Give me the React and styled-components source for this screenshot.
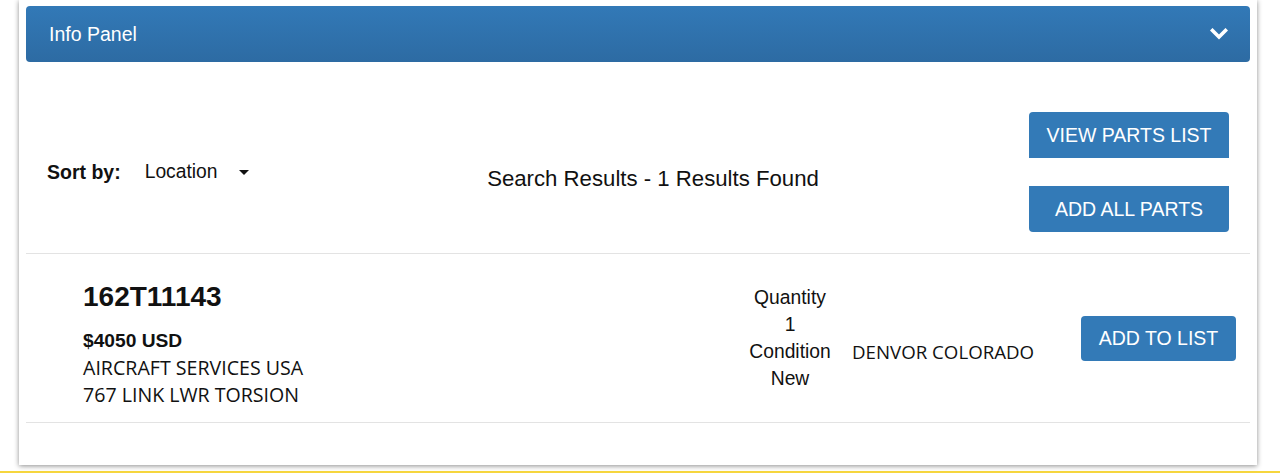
import React from "react";
import styled, { createGlobalStyle } from "styled-components";

const GlobalStyle = createGlobalStyle`
  body {
    margin: 0;
    background: #fff;
    font-family: "Liberation Sans", Arial, sans-serif;
    color: #111;
  }
`;

const Page = styled.div`
  padding-left: 19px;
  height: 471px;
  border-bottom: 2px solid #f6d63e;
  box-sizing: content-box;
`;

const Card = styled.div`
  width: 1238px;
  height: 465px;
  box-sizing: border-box;
  padding: 6px 7px 0;
  background: #fff;
  box-shadow: 0 1px 5px rgba(0, 0, 0, 0.45);
`;

const Header = styled.div`
  height: 56px;
  border-radius: 4px;
  background: linear-gradient(#3279b7, #2d6ba3);
  padding: 0 22px 0 23px;
  display: flex;
  align-items: center;
  justify-content: space-between;
  color: #fff;
  font-size: 19.5px;
`;

const Toolbar = styled.div`
  display: flex;
  align-items: center;
  padding: 50px 21px 21px;
  border-bottom: 1px solid #e3e3e3;
`;

const Sort = styled.div`
  display: flex;
  align-items: center;
  width: 220px;
`;

const SortLabel = styled.span`
  font-weight: bold;
  font-size: 19.5px;
`;

const SortValue = styled.span`
  margin-left: 24px;
  font-size: 19.3px;
`;

const Caret = styled.span`
  margin-left: 21px;
  margin-top: 1px;
  width: 0;
  height: 0;
  border-left: 5px solid transparent;
  border-right: 5px solid transparent;
  border-top: 5px solid #111;
`;

const ResultText = styled.div`
  flex: 1;
  text-align: center;
  font-size: 22.2px;
  padding-left: 10px;
  margin-top: 14px;
`;

const ButtonStack = styled.div`
  display: flex;
  flex-direction: column;
  gap: 28px;
`;

const Button = styled.button`
  width: ${(p) => p.$w || 200}px;
  height: ${(p) => p.$h || 46}px;
  border: none;
  background: #337ab7;
  color: #fff;
  font-family: "Liberation Sans", Arial, sans-serif;
  font-size: 19.5px;
  border-radius: ${(p) => p.$radius || "4px"};
  padding: 0;
`;

const ItemRow = styled.div`
  display: flex;
  align-items: center;
  height: 168px;
  padding: 0 14px 0 57px;
  border-bottom: 1px solid #e3e3e3;
`;

const Info = styled.div`
  flex: 1;
  margin-top: 14px;
`;

const PartNo = styled.div`
  font-size: 28px;
  font-weight: bold;
  line-height: 30px;
  margin-bottom: 15px;
`;

const Price = styled.div`
  font-size: 19.2px;
  font-weight: bold;
  line-height: 27px;
`;

const PlainLine = styled.div`
  font-family: "Open Sans", "DejaVu Sans", sans-serif;
  font-size: 19.6px;
  line-height: 27px;
  color: #111;
`;

const Qty = styled.div`
  width: 100px;
  text-align: center;
  font-size: 19.3px;
  line-height: 27px;
`;

const Location = styled.div`
  width: 229px;
  margin-left: 12px;
  margin-top: 27px;
  font-family: "Open Sans", "DejaVu Sans", sans-serif;
  font-size: 18.7px;
`;

function Chevron() {
  return (
    <svg width="18" height="12" viewBox="0 0 18 12">
      <polyline
        points="2.5,2.5 9,9 15.5,2.5"
        fill="none"
        stroke="#fff"
        strokeWidth="3.6"
        strokeLinecap="square"
      />
    </svg>
  );
}

export default function App() {
  return (
    <>
      <GlobalStyle />
      <Page>
        <Card>
          <Header>
            <span>Info Panel</span>
            <Chevron />
          </Header>
          <Toolbar>
            <Sort>
              <SortLabel>Sort by:</SortLabel>
              <SortValue>Location</SortValue>
              <Caret />
            </Sort>
            <ResultText>Search Results - 1 Results Found</ResultText>
            <ButtonStack>
              <Button $radius="4px 4px 0 0">VIEW PARTS LIST</Button>
              <Button $radius="0 0 4px 4px">ADD ALL PARTS</Button>
            </ButtonStack>
          </Toolbar>
          <ItemRow>
            <Info>
              <PartNo>162T11143</PartNo>
              <Price>$4050 USD</Price>
              <PlainLine>AIRCRAFT SERVICES USA</PlainLine>
              <PlainLine>767 LINK LWR TORSION</PlainLine>
            </Info>
            <Qty>
              <div>Quantity</div>
              <div>1</div>
              <div>Condition</div>
              <div>New</div>
            </Qty>
            <Location>DENVOR COLORADO</Location>
            <Button $w={155} $h={45}>ADD TO LIST</Button>
          </ItemRow>
        </Card>
      </Page>
    </>
  );
}
